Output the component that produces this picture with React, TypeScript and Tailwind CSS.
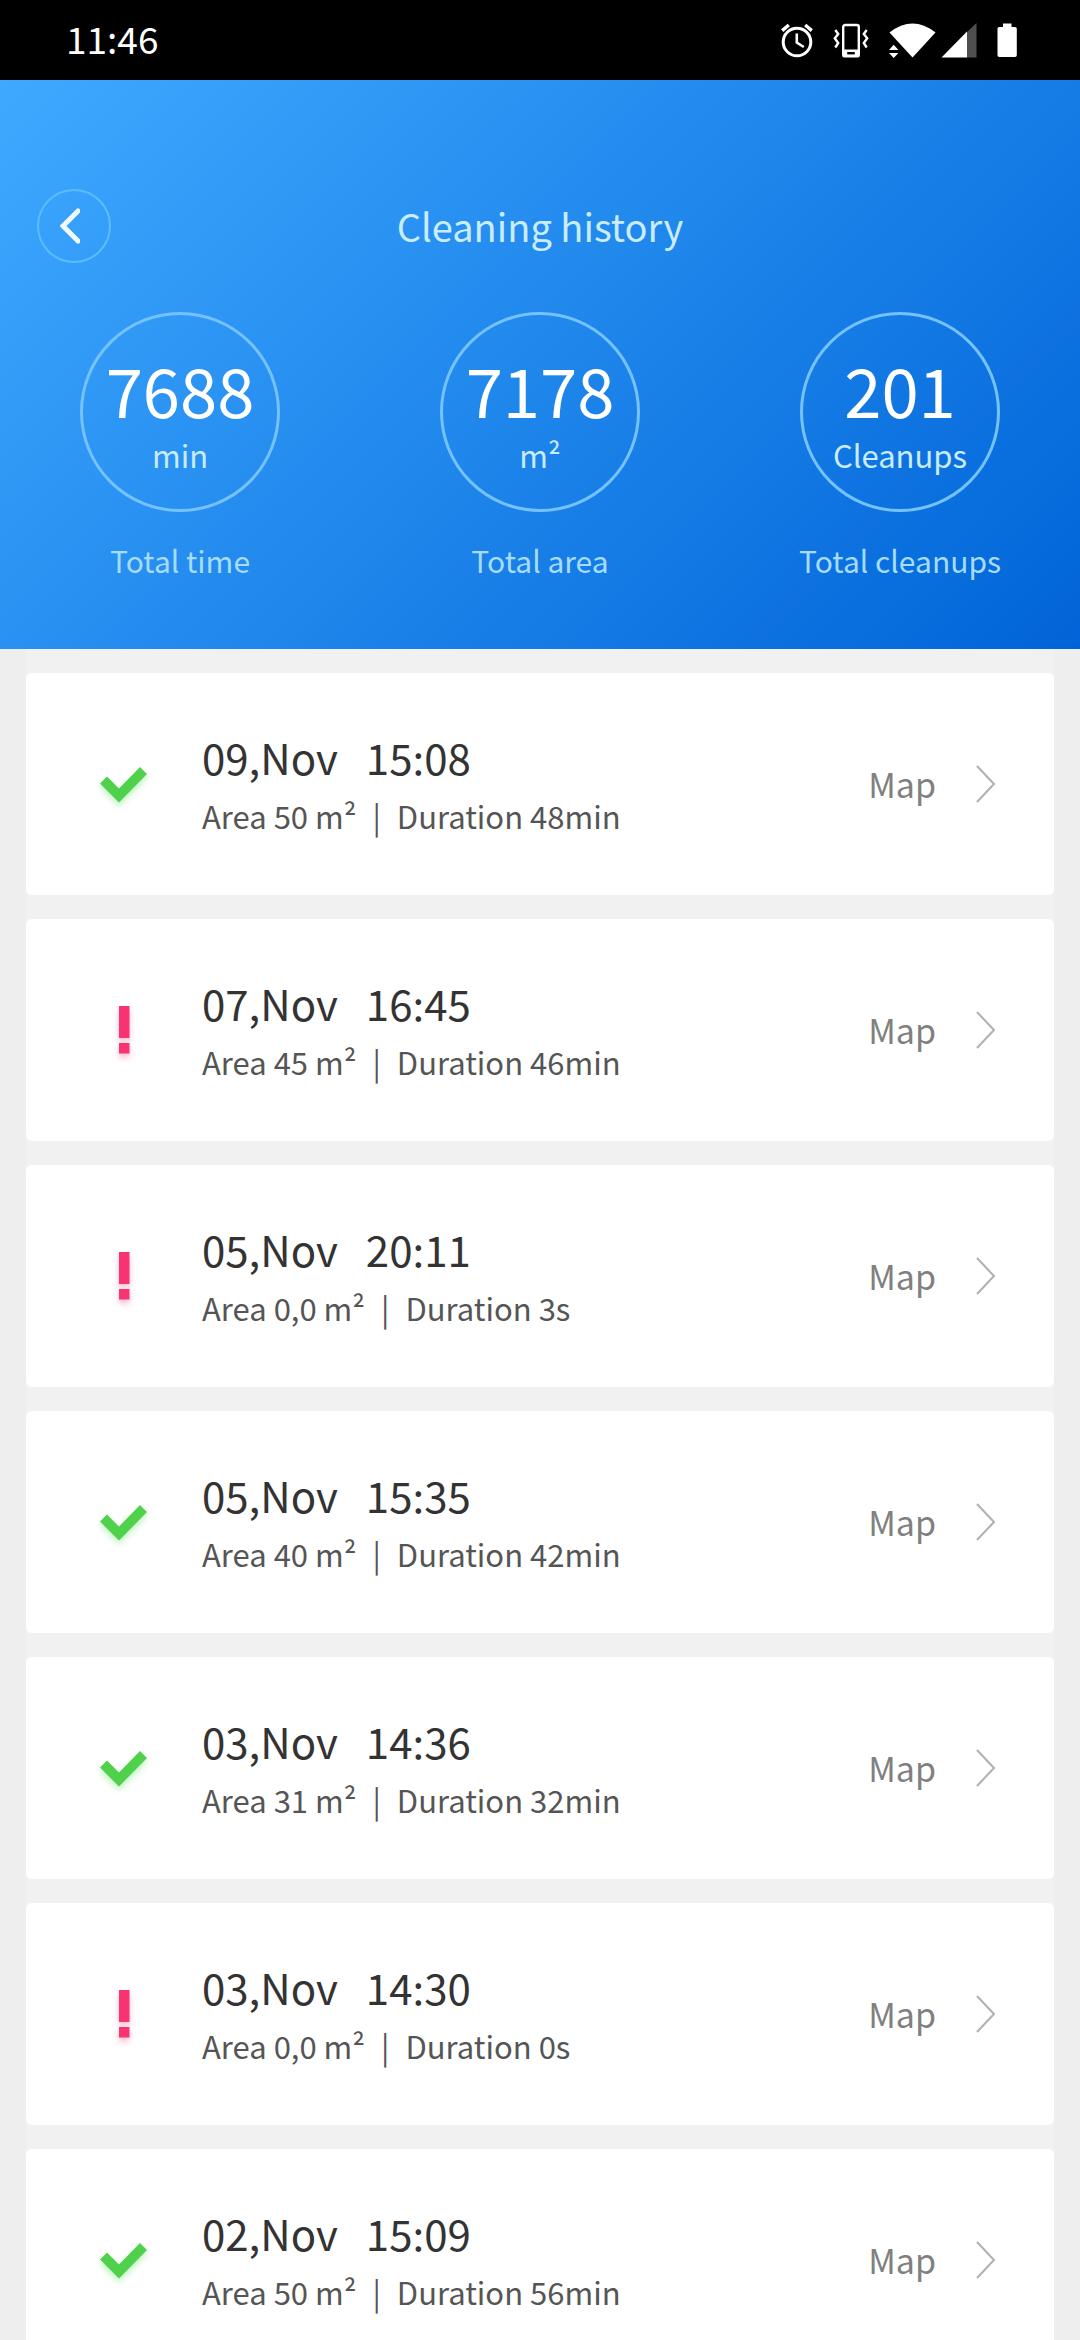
import React from 'react';

type Status = 'done' | 'failed';

interface Cleanup {
  id: number;
  date: string;
  time: string;
  area: string;
  duration: string;
  status: Status;
}

const stats = [
  { value: '7688', unit: 'min', label: 'Total time' },
  { value: '7178', unit: 'm²', label: 'Total area' },
  { value: '201', unit: 'Cleanups', label: 'Total cleanups' },
];

const cleanups: Cleanup[] = [
  { id: 1, date: '09,Nov', time: '15:08', area: '50', duration: '48min', status: 'done' },
  { id: 2, date: '07,Nov', time: '16:45', area: '45', duration: '46min', status: 'failed' },
  { id: 3, date: '05,Nov', time: '20:11', area: '0,0', duration: '3s', status: 'failed' },
  { id: 4, date: '05,Nov', time: '15:35', area: '40', duration: '42min', status: 'done' },
  { id: 5, date: '03,Nov', time: '14:36', area: '31', duration: '32min', status: 'done' },
  { id: 6, date: '03,Nov', time: '14:30', area: '0,0', duration: '0s', status: 'failed' },
  { id: 7, date: '02,Nov', time: '15:09', area: '50', duration: '56min', status: 'done' },
];

const StatusBar = () => (
  <div className="flex h-20 items-center justify-between bg-black pl-[66px] pr-[61px] text-white">
    <span className="pb-1 text-[37px] leading-10">11:46</span>
    <div className="flex items-center">
      {/* alarm */}
      <svg className="mr-[18px] h-9 w-9" viewBox="0 0 36 36" fill="none" stroke="#fff">
        <circle cx="18" cy="20" r="13.8" strokeWidth="3" />
        <path d="M17.8 11.5v9l7 4.5" strokeWidth="2.6" />
        <path d="M3.2 8.6l6.6-5.6M32.8 8.6L26.2 3" strokeWidth="3.4" />
      </svg>
      {/* vibrate */}
      <svg className="mr-[18px] h-9 w-9" viewBox="0 0 36 36" fill="none" stroke="#fff">
        <rect x="10.2" y="3" width="15.6" height="31.4" rx="2" strokeWidth="2.4" />
        <path d="M10 31h16" strokeWidth="7" />
        <path d="M14.2 31.2h7.6" stroke="#000" strokeWidth="2.4" />
        <path
          d="M2.3 8L5.2 12 1.8 16.3 5.2 21 2.3 25.500M33.700 8L30.800 12l3.400 4.300L30.800 21l2.900 4.500"
          strokeWidth="2.4"
        />
      </svg>
      {/* wifi with traffic arrows */}
      <svg className="mr-1 h-9 w-[50px]" viewBox="0 0 50 36" fill="#fff">
        <path d="M2.5 10.5Q25.5-7.5 48.5 10.5L25.5 35.5z" />
        <path d="M2 28h9.4L6.7 22.8zM2 31h9.4L6.7 36z" />
      </svg>
      {/* signal */}
      <svg className="mr-[18px] h-9 w-9" viewBox="0 0 36 36">
        <path d="M26 10L35.5 1v34.5H26z" fill="#4f4f4f" />
        <path d="M.5 35.5L26 9.5v26z" fill="#fff" />
      </svg>
      {/* battery */}
      <svg className="h-9 w-6" viewBox="0 0 24 36" fill="#fff">
        <path d="M8 1.5h8.5V5H20a1.8 1.8 0 0 1 1.8 1.8v26.4A1.8 1.8 0 0 1 20 35H4.3a1.8 1.8 0 0 1-1.8-1.8V6.8A1.8 1.8 0 0 1 4.3 5H8z" />
      </svg>
    </div>
  </div>
);

const StatusIcon = ({ status }: { status: Status }) => {
  if (status === 'done') {
    return (
      <svg
        className="h-12 w-12 drop-shadow-[0_4px_3px_rgba(80,220,80,0.35)]"
        viewBox="0 0 48 48"
        role="img"
        aria-label="Completed"
      >
        <path d="M7 16.5L0 23.5 19 42.5 47 14 40 7 19 28.5z" fill="#4fd14b" />
      </svg>
    );
  }

  return (
    <svg
      className="h-12 w-12 drop-shadow-[0_4px_3px_rgba(250,60,120,0.35)]"
      viewBox="0 0 48 48"
      role="img"
      aria-label="Interrupted"
    >
      <path d="M19 0h10.5v32H19zM19 37h10.5v10.5H19z" fill="#f8336f" />
    </svg>
  );
};

const CleanupCard = ({ item }: { item: Cleanup }) => (
  <li className="flex h-[222px] items-center rounded-md bg-white pl-[74px] pr-[58px]">
    <StatusIcon status={item.status} />
    <div className="ml-[54px] flex-1">
      <div className="flex gap-7 text-[42px] leading-[64px] text-[#333]">
        <span>{item.date}</span>
        <span>{item.time}</span>
      </div>
      <div className="flex gap-4 text-[31px] leading-[54px] text-[#555]">
        <span>Area {item.area} m²</span>
        <span>|</span>
        <span>Duration {item.duration}</span>
      </div>
    </div>
    <a href="#map" className="flex items-center gap-10 text-[34px] leading-[50px] text-[#808080]">
      Map
      <svg className="h-10 w-5" viewBox="0 0 20 40" fill="none" stroke="#b0b0b0" strokeWidth="2">
        <path d="M1 2l17 18L1 38" />
      </svg>
    </a>
  </li>
);

const App = () => {
  return (
    <div className="h-screen overflow-hidden bg-[#eeeeee] font-['Noto_Sans_CJK_SC',sans-serif]">
      <StatusBar />

      <header className="bg-linear-[135deg,#3fa9ff,#0064d8] pt-[109px] pb-[65px]">
        <div className="grid grid-cols-[74px_1fr_74px] items-center px-[37px]">
          <button
            aria-label="Back"
            className="flex h-[74px] w-[74px] items-center justify-center rounded-full border-2 border-[#5cbcff]"
          >
            <svg className="mr-2 h-9 w-5" viewBox="0 0 20 36" fill="none" stroke="#f0fbff" strokeWidth="5">
              <path d="M18 3L3 18l15 15" strokeLinecap="round" />
            </svg>
          </button>
          <h1 className="text-center text-[38px] leading-[56px] text-[#c9ecff]">Cleaning history</h1>
        </div>

        <div className="mt-[49px] grid grid-cols-3">
          {stats.map((stat) => (
            <div key={stat.label} className="flex flex-col items-center">
              <div className="flex h-[200px] w-[200px] flex-col items-center rounded-full border-3 border-[#76c2ff] pt-7">
                <span className="text-[67px] leading-[92px] text-white">{stat.value}</span>
                <span className="text-[31px] leading-10 text-[#c9ecff]">{stat.unit}</span>
              </div>
              <span className="mt-6 text-[30px] leading-[48px] text-[#a5dcff]">{stat.label}</span>
            </div>
          ))}
        </div>
      </header>

      <main className="mx-[26px] bg-[#f1f1f1] pt-6">
        <ul className="flex flex-col gap-6">
          {cleanups.map((item) => (
            <CleanupCard key={item.id} item={item} />
          ))}
        </ul>
      </main>
    </div>
  );
};

export default App;
